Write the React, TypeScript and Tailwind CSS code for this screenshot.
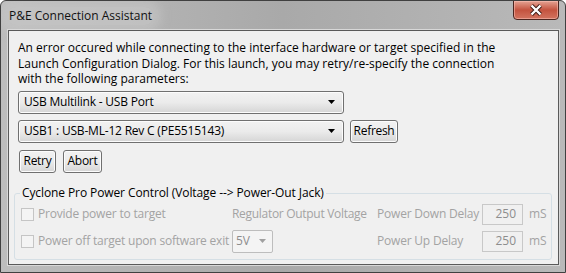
import React from "react";

const font = { fontFamily: '"Open Sans", "Noto Sans", sans-serif' };

function Arrow({ color = "#000" }: { color?: string }) {
  return (
    <svg width="7" height="4" viewBox="0 0 7 4" className="shrink-0">
      <path d="M0 0 H7 L3.5 4 Z" fill={color} />
    </svg>
  );
}

function Combo({ text, w }: { text: string; w: string }) {
  return (
    <div
      className={`${w} h-[23px] flex items-center justify-between pl-[5px] pr-[8px] rounded-[3px] border border-[#707070] bg-gradient-to-b from-[#f2f2f2] via-[#ebebeb] to-[#d5d5d5] shadow-[inset_0_0_0_1px_#fcfcfc]`}
    >
      <span className="text-[12px] text-black whitespace-nowrap tracking-[-0.2px]">{text}</span>
      <Arrow />
    </div>
  );
}

function Btn({ text, w }: { text: string; w: string }) {
  return (
    <div
      className={`${w} h-[23px] flex items-center justify-center rounded-[3px] border border-[#707070] bg-gradient-to-b from-[#f2f2f2] via-[#ebebeb] to-[#d5d5d5] shadow-[inset_0_0_0_1px_#fcfcfc] text-[12px] text-black tracking-[-0.3px] whitespace-nowrap`}
    >
      {text}
    </div>
  );
}

function Check({ label }: { label: string }) {
  return (
    <div className="flex items-center gap-[4px]">
      <div className="shrink-0 w-[13px] h-[13px] border border-[#c5c5c5] bg-[#f4f4f4]" />
      <span className="text-[12px] text-[#a3a3a3] whitespace-nowrap tracking-[-0.2px]">{label}</span>
    </div>
  );
}

function NumBox() {
  return (
    <div className="shrink-0 w-[41px] h-[21px] border border-[#c8c8c8] bg-[#f0f0f0] flex items-center justify-end pr-[6px] text-[12px] text-[#8d8d8d]">
      250
    </div>
  );
}

export default function App() {
  return (
    <div
      style={font}
      className="w-[566px] h-[273px] flex flex-col bg-gradient-to-r from-[#bdbdbd] via-[#a9a9a9] to-[#b9b9b9] border border-[#404040] rounded-t-[6px] overflow-hidden"
    >
      {/* Title bar */}
      <div className="h-[29px] flex items-start justify-between pl-[7px] pr-[6px]">
        <div className="mt-[6px] text-[12px] text-[#111] px-[1px] bg-[#c6c6c6]/70 rounded-[8px] shadow-[0_0_10px_8px_rgba(200,200,200,0.55)]">
          P&amp;E Connection Assistant
        </div>
        <div className="w-[46px] h-[20px] -mt-px rounded-b-[4px] border border-[#4c2620] bg-gradient-to-b from-[#e4a293] via-[#c4533f] to-[#d2735f] flex items-center justify-center shadow-[inset_0_0_0_1px_rgba(255,200,190,0.5)]">
          <svg width="14" height="12" viewBox="0 0 14 12">
            <path
              d="M2.5 1.5 L11.5 10.5 M11.5 1.5 L2.5 10.5"
              stroke="#3a1a14"
              strokeWidth="4.2"
              fill="none"
            />
            <path
              d="M2.5 1.5 L11.5 10.5 M11.5 1.5 L2.5 10.5"
              stroke="#fff"
              strokeWidth="2.4"
              fill="none"
            />
          </svg>
        </div>
      </div>

      {/* Client area */}
      <div className="ml-[7px] mr-[6px] h-[235px] border border-[#5a5a5a] bg-[#f0f0f0] shadow-[0_0_0_1px_#d8d8d8] flex flex-col pl-[9px] pt-[9px]">
        <p className="text-[12px] leading-[15.5px] text-black">
          An error occured while connecting to the interface hardware or target specified in the
          <br />
          Launch Configuration Dialog. For this launch, you may retry/re-specify the connection
          <br />
          with the following parameters:
        </p>
        <div className="mt-[4px] flex">
          <Combo text="USB Multilink - USB Port" w="w-[326px]" />
        </div>
        <div className="mt-[6px] flex gap-[6px]">
          <Combo text="USB1 : USB-ML-12 Rev C (PE5515143)" w="w-[326px]" />
          <Btn text="Refresh" w="w-[48px]" />
        </div>
        <div className="mt-[7px] flex gap-[7px] pl-px">
          <Btn text="Retry" w="w-[37px]" />
          <Btn text="Abort" w="w-[39px]" />
        </div>

        {/* Group box */}
        <div className="relative mt-[20px] -ml-[4px] w-[538px] h-[67px] border border-[#d5dfe5] rounded-[3px]">
          <div className="absolute -top-[9px] left-[5px] px-[2px] bg-[#f0f0f0] text-[12px] text-black whitespace-nowrap leading-[16px] tracking-[-0.1px]">
            Cyclone Pro Power Control (Voltage --&gt; Power-Out Jack)
          </div>
          <div className="grid grid-cols-[211px_145px_105px_auto] grid-rows-[27px_27px] items-center pl-[6px] pt-[7px]">
            <Check label="Provide power to target" />
            <span className="text-[12px] text-[#a3a3a3] whitespace-nowrap tracking-[-0.3px]">Regulator Output Voltage</span>
            <span className="text-[12px] text-[#a3a3a3] whitespace-nowrap tracking-[-0.2px]">Power Down Delay</span>
            <div className="flex items-center gap-[6px]">
              <NumBox />
              <span className="text-[12px] text-[#a3a3a3]">mS</span>
            </div>
            <Check label="Power off target upon software exit" />
            <div className="w-[41px] h-[23px] border border-[#bdbdbd] rounded-[2px] bg-[#f4f4f4] flex items-center justify-between pl-[3px] pr-[6px]">
              <span className="text-[12px] text-[#8d8d8d]">5V</span>
              <Arrow color="#a0a0a0" />
            </div>
            <span className="text-[12px] text-[#a3a3a3] whitespace-nowrap tracking-[-0.2px]">Power Up Delay</span>
            <div className="flex items-center gap-[6px]">
              <NumBox />
              <span className="text-[12px] text-[#a3a3a3]">mS</span>
            </div>
          </div>
        </div>
      </div>
    </div>
  );
}
